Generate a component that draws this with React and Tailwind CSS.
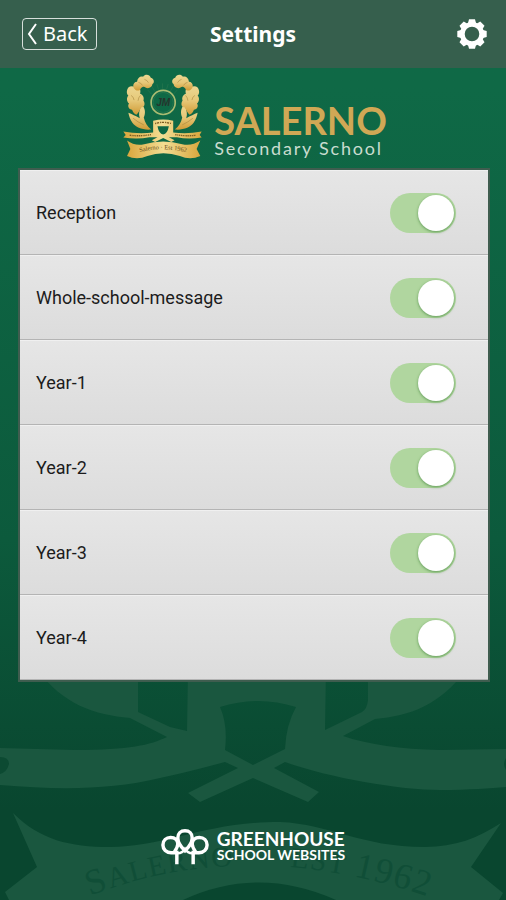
/**
 * Settings Screen
 *
 * Lists the message channels of the school, each with a switch
 * that turns its notifications on or off.
 */

import { useState } from 'react';

const CHANNELS = [
  { id: 'reception', label: 'Reception' },
  { id: 'whole-school', label: 'Whole-school-message' },
  { id: 'year-1', label: 'Year-1' },
  { id: 'year-2', label: 'Year-2' },
  { id: 'year-3', label: 'Year-3' },
  { id: 'year-4', label: 'Year-4' }
];

const GEAR_ANGLES = [0, 45, 90, 135, 180, 225, 270, 315];

function GearIcon() {
  return (
    <svg className="size-8" viewBox="-16 -16 32 32" aria-hidden="true">
      <circle r="9.7" fill="none" stroke="#fff" strokeWidth="4.8" />
      {GEAR_ANGLES.map((angle) => (
        <path key={angle} d="M-4 -11L-3 -14.700H3L4 -11Z" fill="#fff" transform={`rotate(${angle})`} />
      ))}
    </svg>
  );
}

function Header() {
  return (
    <header className="relative grid h-[68px] grid-cols-[1fr_auto_1fr] items-center bg-[#365f4d] px-[18px] text-white">
      <button
        type="button"
        className="ml-1 flex h-8 items-center gap-1 justify-self-start rounded-sm border border-white/80 px-1 font-['Noto_Sans',sans-serif] text-xl"
      >
        <svg className="h-6 w-3" viewBox="0 0 12 24" fill="none" stroke="currentColor" strokeWidth="2" aria-hidden="true">
          <path d="M9 2L2 12L9 22" />
        </svg>
        <span className="pr-1">Back</span>
      </button>
      <h1 className="pt-[2px] font-['Noto_Sans',sans-serif] text-[21px] font-bold">Settings</h1>
      <button type="button" aria-label="Settings" className="justify-self-end">
        <GearIcon />
      </button>
    </header>
  );
}

// One laurel branch, the other side is the same one mirrored
function Laurel() {
  return (
    <g>
      <path d="M50 136C60 140 72 146 84 152C80 140 82 128 90 112C101 122 102 138 96 150C100 166 106 176 118 186C92 188 72 180 62 166C55 156 52 146 50 136Z" />
      <path d="M50 60C43 70 45 80 50 84C43 92 46 104 52 108C46 116 52 126 61 127C64 134 68 140 74 142C80 136 84 128 88 120C99 120 101 108 95 99C99 90 91 80 85 79C88 68 84 62 78 62C70 58 58 54 50 60Z" />
      <path d="M66 62C62 52 67 43 76 43C77 31 86 25 94 28C101 19 114 22 117 31C127 34 129 45 122 50C121 60 109 66 101 60C97 56 91 58 87 63C84 72 72 72 66 62Z" />
      <g fill="none" stroke="#9c7a35" strokeWidth="1.500">
        <path d="M58 84Q66 88 67 98M86 84Q80 90 79 100M80 45Q88 46 92 54M98 36Q106 38 110 46" />
        <path d="M64 152Q78 164 96 172" />
      </g>
    </g>
  );
}

function Crest() {
  return (
    <svg className="h-[85px] w-[79px]" viewBox="34 20 236 254" role="img" aria-label="Salerno crest">
      <defs>
        <linearGradient id="gold" x1="0" y1="0" x2="0" y2="1">
          <stop offset="0" stopColor="#ecd791" />
          <stop offset="0.5" stopColor="#e6c878" />
          <stop offset="1" stopColor="#d09a35" />
        </linearGradient>
        <linearGradient id="ribbon">
          <stop offset="0" stopColor="#d9a63d" />
          <stop offset="0.5" stopColor="#f3dd93" />
          <stop offset="1" stopColor="#d9a63d" />
        </linearGradient>
        <path id="crest-curve" d="M84 254Q154 235 236 257" />
      </defs>
      <g stroke="#2f7a50" strokeWidth="1.500">
        <path d="M152 64V48M140 66L135 50M164 66L169 50M129 72L120 57M175 72L184 57M119 80L108 68M185 80L196 68" />
      </g>
      <g fill="url(#gold)">
        <Laurel />
        <g transform="translate(307 0) scale(-1 1)">
          <Laurel />
        </g>
      </g>
      <circle cx="154" cy="105" r="36" fill="none" stroke="#a9bb72" strokeWidth="5" />
      <circle cx="154" cy="105" r="30" fill="none" stroke="#2f7a50" strokeWidth="2" />
      <text x="154" y="116" textAnchor="middle" fill="#26352d" className="font-['Liberation_Sans',sans-serif] text-[30px] font-bold italic">
        JM
      </text>
      <path
        d="M35 192Q80 201 124 195L124 160Q154 152 184 160L184 195Q225 201 269 192L263 202L269 210Q228 216 195 209L171 209L188 218L178 223L154 211L130 223L120 218L137 209L113 209Q78 216 35 210L42 202ZM137 176Q141 198 154 201Q167 198 171 176Z"
        fill="url(#ribbon)"
        fillRule="evenodd"
      />
      <path d="M54 203Q84 207 118 201M190 201Q222 207 252 203" fill="none" stroke="#7a5a20" strokeWidth="4" strokeDasharray="4 2 3 2" />
      <path d="M130 168Q154 161 178 168" fill="none" stroke="#7a5a20" strokeWidth="4" strokeDasharray="3 2 7 3" />
      <path
        d="M46 219Q69 236 97 230Q154 214 211 230Q240 236 265 219L254 244L265 265Q235 279 204 265Q154 248 107 265Q75 279 46 265L56 244Z"
        fill="url(#ribbon)"
      />
      <text fill="#6b4e1a" className="font-['Liberation_Serif',serif] text-[19px]">
        <textPath href="#crest-curve">Salerno · Est 1962</textPath>
      </text>
    </svg>
  );
}

function SchoolLogo() {
  return (
    <div className="flex items-start justify-center gap-3 pt-[6px] pb-[9px] pl-1">
      <Crest />
      <div className="pt-7 font-['Lato',sans-serif]">
        <p className="text-[38px] leading-9 font-bold text-[#d0a855]">SALERNO</p>
        <p className="text-lg leading-5 tracking-widest text-[#c9dccf]">Secondary School</p>
      </div>
    </div>
  );
}

function ChannelRow({ id, label, checked, onToggle }) {
  return (
    <li className="flex h-[85px] items-center justify-between border-t border-[#f0f0f0] bg-linear-to-b from-[#e6e6e6] to-[#dcdcdc] pr-8 pl-4 shadow-[inset_0_-1px_0_#b4b4b4]">
      <label htmlFor={id} className="text-lg text-[#1c1c1c]">
        {label}
      </label>
      <input
        id={id}
        type="checkbox"
        role="switch"
        checked={checked}
        onChange={() => onToggle(id)}
        className="flex h-10 w-[66px] cursor-pointer appearance-none items-center rounded-full bg-[#b9b9b9] px-[2px] transition-colors before:size-9 before:rounded-full before:bg-white before:shadow-[0_1px_3px_#5f9a55] before:content-[''] checked:justify-end checked:bg-[#b0d69f]"
      />
    </li>
  );
}

// Faint enlarged crest behind the lower part of the screen
function Watermark() {
  return (
    <svg className="absolute bottom-0 left-0 w-full" viewBox="0 670 506 230" aria-hidden="true">
      <defs>
        <path id="banner-curve" d="M90 896Q262 828 470 912" />
      </defs>
      <g fill="#1a573f">
        <path
          fillRule="evenodd"
          d="M38 670C62 704 95 715 130 718L167 737C150 745 130 750 75 750L0 748V785C60 790 110 790 160 778C185 773 205 767 225 762L238 768L188 793L200 802L253 778L308 802L319 792L274 768L285 762C330 778 400 790 440 790C470 790 490 788 506 787V749L440 750C400 749 370 745 343 736L375 719C410 716 440 705 466 670ZM138 670H188L187 731L170 727L138 712ZM326 670H368V700Q367 709 362 712L325 730ZM220 707Q258 695 296 707Q286 725 285 749L253 765L225 750Q228 725 220 707Z"
        />
        <path d="M13 813C40 840 70 847 110 847C165 847 205 822 280 822C330 824 360 847 425 847C455 847 478 838 501 823L471 867L503 893L499 900H336Q258 865 183 900H9L5 892L37 867Z" />
      </g>
      <path d="M0 757Q9 757 9 764Q7 772 0 774ZM506 758Q502 764 506 770Z" fill="#0c4a32" />
      <g fill="#104e37" className="font-['Liberation_Serif',serif] text-[29px] tracking-wider">
        <text>
          <textPath href="#banner-curve">
            <tspan className="text-[36px]">S</tspan>ALERNO
          </textPath>
        </text>
        <text>
          <textPath href="#banner-curve" startOffset="204">
            EST <tspan className="text-[36px]">1962</tspan>
          </textPath>
        </text>
      </g>
    </svg>
  );
}

function Footer() {
  return (
    <footer className="relative mt-auto flex items-center justify-center gap-2 pb-[34px] text-white">
      <svg className="h-[38px] w-12" viewBox="0 0 50 38" fill="none" stroke="currentColor" strokeWidth="3.600" aria-hidden="true">
        <path d="M16.500 37V23M33.500 37V23" />
        <path d="M25 23C21 19 17.500 15 17.500 9.500C17.500 5 20.500 2 25 2C29.500 2 32.500 5 32.500 9.500C32.500 15 29 19 25 23Z" />
        <path d="M16.500 25H10.500C5.500 25 2 21.500 2 17C2 12 5.500 9 10 9C14.500 9 17.500 12 17.500 16C17.500 19 16 21 14 24" />
        <path d="M33.500 25H39.500C44.500 25 48 21.500 48 17C48 12 44.500 9 40 9C35.500 9 32.500 12 32.500 16C32.500 19 34 21 36 24" />
        <path d="M16.500 25.500Q22 26 25 21Q28 26 33.500 25.500" strokeWidth="2.500" />
      </svg>
      <p className="font-['Lato',sans-serif] font-bold">
        <span className="block text-[19px] leading-4">GREENHOUSE</span>
        <span className="block text-sm leading-4">SCHOOL WEBSITES</span>
      </p>
    </footer>
  );
}

export default function App() {
  const [enabled, setEnabled] = useState(() => Object.fromEntries(CHANNELS.map((c) => [c.id, true])));

  const handleToggle = (id) => {
    setEnabled((prev) => ({ ...prev, [id]: !prev[id] }));
  };

  return (
    <div className="relative flex min-h-screen flex-col overflow-hidden bg-linear-to-b from-[#0f6946] from-10% via-[#0c5a3c] via-60% to-[#09462f] to-90% font-['Roboto',sans-serif]">
      <Watermark />
      <Header />
      <main className="relative">
        <SchoolLogo />
        <ul className="mr-4 ml-[18px] border-2 border-[#3f5d4f]">
          {CHANNELS.map((channel) => (
            <ChannelRow
              key={channel.id}
              id={channel.id}
              label={channel.label}
              checked={enabled[channel.id]}
              onToggle={handleToggle}
            />
          ))}
        </ul>
      </main>
      <Footer />
    </div>
  );
}
